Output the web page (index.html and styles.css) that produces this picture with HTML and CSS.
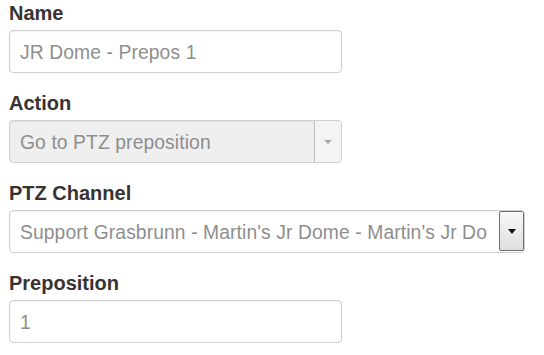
FILE: index.html
```html
<!DOCTYPE html>
<html>
<head>
<meta charset="utf-8">
<link rel="stylesheet" href="styles.css">
</head>
<body>
<div class="form">
  <div class="group">
    <div class="label">Name</div>
    <div class="box short"><span class="value">JR Dome - Prepos 1</span></div>
  </div>
  <div class="group">
    <div class="label">Action</div>
    <div class="box short disabled">
      <span class="value">Go to PTZ preposition</span>
      <span class="btn-flat"><span class="caret light"></span></span>
    </div>
  </div>
  <div class="group">
    <div class="label">PTZ Channel</div>
    <div class="box wide">
      <span class="value">Support Grasbrunn - Martin's Jr Dome - Martin's Jr Do</span>
      <span class="btn-native"><span class="caret dark"></span></span>
    </div>
  </div>
  <div class="group">
    <div class="label">Preposition</div>
    <div class="box short"><span class="value">1</span></div>
  </div>
</div>
</body>
</html>
```

FILE: styles.css
```css
html, body {
  margin: 0;
  padding: 0;
  background: #ffffff;
}
.form {
  padding-left: 9px;
  font-family: "Liberation Sans", Arial, sans-serif;
}
.group {
  padding-top: 3px;
  margin-bottom: 17px;
}
.label {
  font-size: 20px;
  font-weight: bold;
  line-height: 20px;
  height: 20px;
  color: #383232;
  margin-bottom: 7px;
}
.box {
  box-sizing: border-box;
  height: 43px;
  border: 1px solid #cfcfcf;
  border-radius: 4px;
  background: #ffffff;
  box-shadow: inset 0 1px 2px rgba(0,0,0,0.06);
  display: flex;
  align-items: center;
  overflow: hidden;
}
.short { width: 333px; }
.wide { width: 516px; }
.disabled { background: #efefef; }
.value {
  flex: 1;
  padding-left: 10px;
  padding-top: 3px;
  font-size: 19.3px;
  letter-spacing: 0.1px;
  color: #8e8e8e;
  white-space: nowrap;
  overflow: hidden;
}
.btn-flat {
  box-sizing: border-box;
  align-self: stretch;
  width: 27px;
  border-left: 1px solid #bdbdbd;
  background: #f4f4f4;
  display: flex;
  align-items: center;
  justify-content: center;
}
.btn-native {
  box-sizing: border-box;
  align-self: flex-start;
  width: 25px;
  height: 40px;
  border: 1px solid #6e6e6e;
  border-radius: 2px;
  background: linear-gradient(#f8f8f8, #dedede);
  display: flex;
  align-items: center;
  justify-content: center;
}
.caret {
  width: 0;
  height: 0;
  border-left: 4px solid transparent;
  border-right: 4px solid transparent;
}
.caret.light { border-top: 4px solid #a8a8a8; }
.caret.dark { border-top: 5px solid #111111; }
```
